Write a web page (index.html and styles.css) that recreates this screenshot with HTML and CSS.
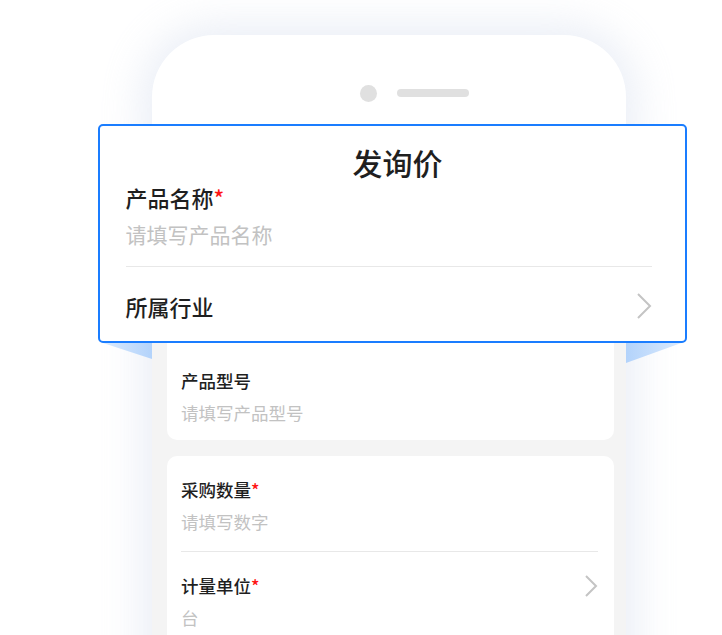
FILE: index.html
```html
<!DOCTYPE html>
<html lang="zh-CN">
<head>
  <meta charset="UTF-8">
  <meta name="viewport" content="width=device-width, initial-scale=1.0">
  <title>发询价</title>
  <link rel="stylesheet" href="styles.css">
</head>
<body>
  <div class="stage">
    <div class="phone">
      <div class="phone-head">
        <span class="camera"></span>
        <span class="speaker"></span>
      </div>
      <div class="phone-screen">
        <div class="card card-first">
          <div class="field">
            <div class="field-label">产品型号</div>
            <div class="field-value">请填写产品型号</div>
          </div>
        </div>
        <div class="card">
          <div class="field">
            <div class="field-label">采购数量<span class="required">*</span></div>
            <div class="field-value">请填写数字</div>
          </div>
          <div class="field field-select">
            <div class="field-body">
              <div class="field-label">计量单位<span class="required">*</span></div>
              <div class="field-value">台</div>
            </div>
            <svg class="chevron" width="14" height="22" viewBox="0 0 14 22"><polyline points="2,1 12,11 2,21" fill="none" stroke="#c4c4c4" stroke-width="2"/></svg>
          </div>
        </div>
      </div>
    </div>

    <span class="wing wing-left"></span>
    <span class="wing wing-right"></span>

    <!-- highlighted form part, lifted over the phone -->
    <div class="popup">
      <h1 class="popup-title">发询价</h1>
      <div class="popup-field">
        <div class="popup-label">产品名称<span class="required">*</span></div>
        <div class="popup-value">请填写产品名称</div>
      </div>
      <div class="popup-row">
        <div class="popup-label">所属行业</div>
        <svg class="chevron" width="16" height="26" viewBox="0 0 16 26"><polyline points="2,1 14,13 2,25" fill="none" stroke="#c4c4c4" stroke-width="2"/></svg>
      </div>
    </div>
  </div>
</body>
</html>
```

FILE: styles.css
```css
:root {
  --text-color: #1f1f1f;
  --placeholder-color: #c2c2c2;
  --blue: #1a7dff;
  --screen-bg: #f4f4f4;
  --divider: #e8e8e8;
}

* {
  margin: 0;
  padding: 0;
  box-sizing: border-box;
}

body {
  font-family: "Noto Sans CJK SC", "Noto Sans", sans-serif;
  color: var(--text-color);
  background: #fff;
  overflow: hidden;
}

.stage {
  position: relative;
  width: 722px;
  height: 635px;
  padding-top: 35px;
  overflow: hidden;
}

/* Phone */
.phone {
  margin-left: 152px;
  width: 474px;
  height: 700px;
  background: #fff;
  border-radius: 62px 62px 0 0;
  box-shadow: 0 0 40px 10px rgba(208, 218, 234, 0.45);
  overflow: hidden;
}

.phone-head {
  height: 290px;
  display: flex;
  align-items: center;
  gap: 20px;
  padding-left: 208px;
  padding-bottom: 200px;
  padding-top: 26px;
}

.camera {
  width: 17px;
  height: 17px;
  border-radius: 50%;
  background: #e0e0e0;
}

.speaker {
  width: 72px;
  height: 8px;
  border-radius: 4px;
  background: #e0e0e0;
}

.phone-screen {
  background: var(--screen-bg);
  padding: 0 12px 0 15px;
  height: 400px;
}

.card {
  background: #fff;
  border-radius: 10px;
  padding: 0 16px 0 14px;
  margin-bottom: 16px;
}

.card-first {
  padding-top: 22px;
  border-radius: 0 0 10px 10px;
}

.card-first .field {
  padding-bottom: 15px;
}

.field {
  padding: 22px 0 17px;
  border-bottom: 1px solid var(--divider);
}

.field:last-child {
  border-bottom: none;
}

.field-label {
  font-size: 17.5px;
  line-height: 24px;
  font-weight: 500;
}

.field-value {
  margin-top: 8px;
  font-size: 17.5px;
  line-height: 24px;
  color: var(--placeholder-color);
}

.field-select {
  display: flex;
  align-items: flex-start;
  justify-content: space-between;
}

.field-select .chevron {
  margin-top: 1px;
}

.required {
  color: #ff1414;
}

/* Lifted popup */
.popup {
  position: absolute;
  left: 98px;
  top: 124px;
  width: 589px;
  height: 219px;
  background: #fff;
  border: 2.5px solid var(--blue);
  border-radius: 5px;
  padding: 17.5px 33.5px 0 25.5px;
}

.popup-title {
  font-size: 30px;
  line-height: 36px;
  font-weight: 500;
  text-align: center;
  padding-left: 18px;
}

.popup-field {
  padding-top: 4px;
  padding-bottom: 19px;
  border-bottom: 1px solid var(--divider);
}

.popup-label {
  font-size: 22px;
  line-height: 26px;
  font-weight: 500;
}

.popup-value {
  margin-top: 11px;
  font-size: 21px;
  line-height: 26px;
  color: var(--placeholder-color);
}

.popup-row {
  display: flex;
  align-items: center;
  justify-content: space-between;
  padding-top: 26px;
}

.wing {
  position: absolute;
  top: 342px;
}

.wing-left {
  left: 100px;
  width: 52px;
  height: 17px;
  background: linear-gradient(to right, #dcebfd, #b3d3fb);
  clip-path: polygon(0 0, 100% 0, 100% 100%);
}

.wing-right {
  left: 626px;
  width: 58px;
  height: 21px;
  background: linear-gradient(to left, #dcebfd, #b3d3fb);
  clip-path: polygon(0 0, 100% 0, 0 100%);
}
```
